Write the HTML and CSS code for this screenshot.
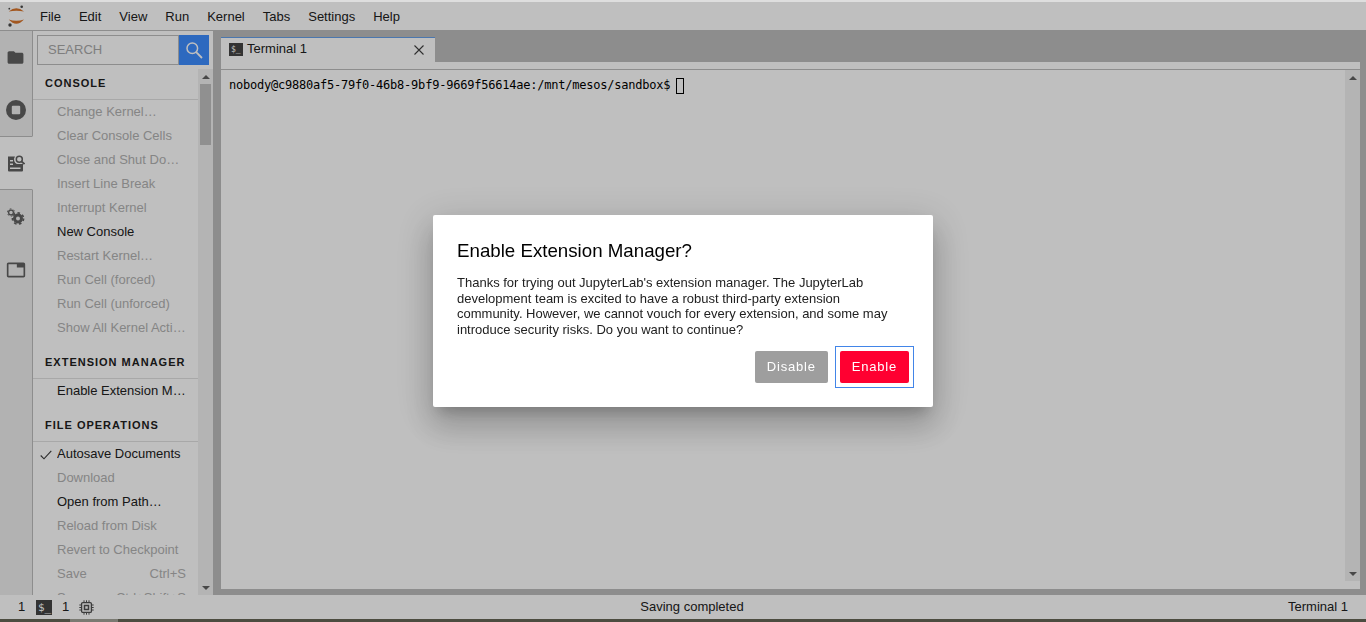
FILE: index.html
```html
<!DOCTYPE html>
<html lang="en">
<head>
<meta charset="utf-8">
<title>JupyterLab</title>
<link rel="stylesheet" href="styles.css">
</head>
<body>
<div class="top-strip"></div>
<header class="menubar">
  <div class="logo">
    <svg width="31" height="28" viewBox="0 0 31 28">
      <path d="M8.700 9.500Q16.300 3 24 9.500Q16.300 8.200 8.700 9.500Z" fill="#d9742a"/>
      <path d="M8.700 17.500Q16.300 26 24 17.500Q16.300 20.200 8.700 17.500Z" fill="#d9742a"/>
      <circle cx="21.700" cy="4.700" r="1.300" fill="#4a4a4a"/>
      <circle cx="9.300" cy="6.700" r=".9" fill="#4a4a4a"/>
      <circle cx="10" cy="23" r="1.700" fill="#4a4a4a"/>
    </svg>
  </div>
  <nav class="menu">
    <span class="menu-item">File</span><span class="menu-item">Edit</span><span class="menu-item">View</span><span class="menu-item">Run</span><span class="menu-item">Kernel</span><span class="menu-item">Tabs</span><span class="menu-item">Settings</span><span class="menu-item">Help</span>
  </nav>
</header>

<main class="workspace">
  <aside class="sidetabs">
    <div class="sidetab first">
      <svg class="icon" width="19" height="19" viewBox="0 0 24 24"><path d="M10 4H4c-1.100 0-2 .9-2 2v12c0 1.100.9 2 2 2h16c1.100 0 2-.9 2-2V8c0-1.100-.9-2-2-2h-8l-2-2z"/></svg>
    </div>
    <div class="sidetab">
      <svg class="icon" width="20" height="20" viewBox="0 0 20 20"><path fill-rule="evenodd" d="M10 0a10 10 0 1 0 0 20a10 10 0 1 0 0-20zM6.800 5.800h6.400a1 1 0 0 1 1 1v6.400a1 1 0 0 1-1 1h-6.400a1 1 0 0 1-1-1v-6.400a1 1 0 0 1 1-1z"/></svg>
    </div>
    <div class="sidetab active">
      <svg class="icon" width="18" height="18" viewBox="0 0 18 18"><path fill-rule="evenodd" d="M1 2.500h7a5 5 0 0 0 1.800 7.500H16v6.500a1 1 0 0 1-1 1H2a1 1 0 0 1-1-1zM3 6v1.500h3V6zM3 9.500v1.500h3V9.500zM3 13.500v1.500h10.500v-1.500z"/><circle cx="12.300" cy="5.300" r="3" fill="none" stroke="#616161" stroke-width="1.500"/><path d="M14.500 7.500l3 2.500" stroke="#616161" stroke-width="1.800" fill="none"/></svg>
    </div>
    <div class="sidetab">
      <svg class="icon" width="18" height="18" viewBox="0 0 18 18">
        <circle cx="4" cy="4.500" r="2.400" fill="none" stroke="#616161" stroke-width="1.300"/>
        <circle cx="4" cy="4.500" r="3.600" fill="none" stroke="#616161" stroke-width="1" stroke-dasharray="1.900 1.870"/>
        <circle cx="11" cy="10.500" r="3.500" fill="none" stroke="#616161" stroke-width="3"/>
        <circle cx="11" cy="10.500" r="5.600" fill="none" stroke="#616161" stroke-width="1.600" stroke-dasharray="2.600 2.430"/>
      </svg>
    </div>
    <div class="sidetab">
      <svg class="icon" width="20" height="20" viewBox="0 0 24 24"><path d="M21 3H3c-1.100 0-2 .9-2 2v14c0 1.100.9 2 2 2h18c1.100 0 2-.9 2-2V5c0-1.100-.9-2-2-2zm0 16H3V5h10v4h8v10z"/></svg>
    </div>
    <div class="sidetab-rest"></div>
  </aside>

  <section class="palette">
    <div class="search">
      <div class="search-input">SEARCH</div>
      <div class="search-btn">
        <svg width="18" height="18" viewBox="0 0 18 18" fill="none" stroke="#fff" stroke-width="1.500"><circle cx="7.300" cy="7.300" r="5.300"/><path d="M11.200 11.200l5.800 5.800" stroke-width="1.800"/></svg>
      </div>
    </div>
    <div class="palette-body">
      <div class="cmd-list">
        <h2 class="cmd-header first">Console</h2>
        <div class="cmd off"><span class="cmd-label">Change Kernel…</span></div>
        <div class="cmd off"><span class="cmd-label">Clear Console Cells</span></div>
        <div class="cmd off"><span class="cmd-label">Close and Shut Down…</span></div>
        <div class="cmd off"><span class="cmd-label">Insert Line Break</span></div>
        <div class="cmd off"><span class="cmd-label">Interrupt Kernel</span></div>
        <div class="cmd"><span class="cmd-label">New Console</span></div>
        <div class="cmd off"><span class="cmd-label">Restart Kernel…</span></div>
        <div class="cmd off"><span class="cmd-label">Run Cell (forced)</span></div>
        <div class="cmd off"><span class="cmd-label">Run Cell (unforced)</span></div>
        <div class="cmd off"><span class="cmd-label">Show All Kernel Activity</span></div>
        <h2 class="cmd-header">Extension Manager</h2>
        <div class="cmd"><span class="cmd-label">Enable Extension Manager</span></div>
        <h2 class="cmd-header">File Operations</h2>
        <div class="cmd">
          <svg class="check" width="12" height="10" viewBox="0 0 12 10" fill="none" stroke="#3a3a3a" stroke-width="1.100"><path d="M.7 5.500L4 8.800L11.300 .8"/></svg>
          <span class="cmd-label">Autosave Documents</span>
        </div>
        <div class="cmd off"><span class="cmd-label">Download</span></div>
        <div class="cmd"><span class="cmd-label">Open from Path…</span></div>
        <div class="cmd off"><span class="cmd-label">Reload from Disk</span></div>
        <div class="cmd off"><span class="cmd-label">Revert to Checkpoint</span></div>
        <div class="cmd off"><span class="cmd-label">Save</span><span class="cmd-key">Ctrl+S</span></div>
        <div class="cmd off"><span class="cmd-label">Save As…</span><span class="cmd-key">Ctrl+Shift+S</span></div>
      </div>
      <div class="scrollbar">
        <div class="arrow up"></div>
        <div class="thumb"></div>
        <div class="scroll-space"></div>
        <div class="arrow down"></div>
      </div>
    </div>
  </section>

  <section class="dock">
    <div class="tabbar">
      <div class="tab">
        <span class="term-icon small">$_</span>
        <span class="tab-title">Terminal 1</span>
        <svg class="tab-close" width="10" height="10" viewBox="0 0 10 10" fill="none" stroke="#3f3f3f" stroke-width="1.100"><path d="M.5 .5l9 9M9.500 .5l-9 9"/></svg>
      </div>
    </div>
    <div class="term-panel">
      <div class="term-toolbar"></div>
      <div class="term-body">
        <div class="term-text"><span>nobody@c9880af5-79f0-46b8-9bf9-9669f56614ae:/mnt/mesos/sandbox$ </span><span class="cursor"></span></div>
        <div class="scrollbar">
          <div class="arrow up"></div>
          <div class="scroll-space"></div>
          <div class="arrow down"></div>
        </div>
      </div>
    </div>
  </section>
</main>

<footer class="statusbar">
  <div class="status-left">
    <span class="status-num">1</span>
    <span class="term-icon">$_</span>
    <span class="status-num">1</span>
    <svg class="chip" width="15" height="15" viewBox="0 0 15 15" fill="none" stroke="#505050" stroke-width="1.300">
      <rect x="2.600" y="2.600" width="9.800" height="9.800" rx="1.200"/>
      <rect x="5.500" y="5.500" width="4" height="4" stroke-width="1.500"/>
      <path d="M5 .3v2M7.500 .3v2M10 .3v2M5 12.700v2M7.500 12.700v2M10 12.700v2M.3 5h2M.3 7.500h2M.3 10h2M12.700 5h2M12.700 7.500h2M12.700 10h2" stroke-width="1"/>
    </svg>
  </div>
  <div class="status-mid">Saving completed</div>
  <div class="status-right">Terminal 1</div>
</footer>
<div class="bottom-strip"><div class="bottom-thumb"></div></div>

<div class="overlay">
  <div class="dialog" role="dialog">
    <h1 class="dialog-title">Enable Extension Manager?</h1>
    <p class="dialog-body">Thanks for trying out JupyterLab's extension manager. The JupyterLab development team is excited to have a robust third-party extension community. However, we cannot vouch for every extension, and some may introduce security risks. Do you want to continue?</p>
    <div class="dialog-actions">
      <button class="btn btn-muted">Disable</button>
      <button class="btn btn-accent">Enable</button>
    </div>
  </div>
</div>
</body>
</html>
```

FILE: styles.css
```css
* { box-sizing: border-box; }
html, body { margin: 0; height: 622px; overflow: hidden; }
body {
  display: flex;
  flex-direction: column;
  font-family: "Liberation Sans", Arial, sans-serif;
  font-size: 13px;
  color: #212121;
  background: #bdbdbd;
}

.top-strip { height: 2px; background: #dedede; position: relative; z-index: 2; flex: none; }
.menubar {
  flex: none;
  height: 29px;
  display: flex;
  align-items: flex-start;
  background: #fff;
  border-bottom: 1px solid #bdbdbd;
}
.logo { width: 31px; height: 28px; flex: none; }
.logo svg { display: block; }
.menu { display: flex; padding-top: 1px; }
.menu-item { padding: 0 9px; line-height: 28px; }

.workspace { flex: 1; display: flex; min-height: 0; }

.sidetabs { width: 33px; flex: none; display: flex; flex-direction: column; background: #eeeeee; }
.sidetab {
  height: 53px;
  flex: none;
  display: flex;
  align-items: center;
  justify-content: center;
  padding-right: 1px;
  border-right: 1px solid #bdbdbd;
}
.sidetab.first { height: 52px; }
.sidetab.active { height: 54px; background: #fff; border-right-color: #fff; border-top: 1px solid #bdbdbd; border-bottom: 1px solid #bdbdbd; }
.sidetab-rest { flex: 1; border-right: 1px solid #bdbdbd; }
.icon { fill: #616161; display: block; }

.palette { width: 180px; flex: none; display: flex; flex-direction: column; background: #fff; min-height: 0; }
.search { display: flex; height: 38px; padding: 4px 4px 4px 4px; flex: none; }
.search-input {
  flex: 1;
  border: 1px solid #bdbdbd;
  padding-left: 10px;
  line-height: 28px;
  color: #a8a8a8;
}
.search-btn { width: 30px; background: #3d8cff; display: flex; align-items: center; justify-content: center; flex: none; }
.palette-body { flex: 1; display: flex; min-height: 0; }
.cmd-list { flex: 1; overflow: hidden; min-width: 0; }
.cmd-header {
  margin: 0;
  height: 39px;
  padding-top: 14px;
  line-height: 16px;
  padding-left: 12px;
  font-size: 11px;
  font-weight: 700;
  letter-spacing: 1px;
  text-transform: uppercase;
  color: #212121;
  border-bottom: 1px solid #e0e0e0;
}
.cmd-header.first { height: 31px; padding-top: 6px; }
.cmd {
  height: 24px;
  display: flex;
  align-items: center;
  padding: 0 12px 0 24px;
  line-height: 24px;
  position: relative;
  color: #212121;
}
.cmd.off { color: #b2b2b2; }
.cmd-label { flex: 1; min-width: 0; white-space: nowrap; overflow: hidden; text-overflow: ellipsis; }
.cmd-key { flex: none; margin-left: 8px; }
.check { position: absolute; left: 7px; top: 8px; }

.scrollbar { width: 15px; flex: none; background: #f1f1f1; display: flex; flex-direction: column; align-items: center; }
.arrow { width: 15px; height: 15px; flex: none; display: flex; align-items: center; justify-content: center; }
.arrow::before { content: ""; border-left: 4px solid transparent; border-right: 4px solid transparent; }
.arrow.up::before { border-bottom: 4px solid #606060; }
.arrow.down::before { border-top: 4px solid #606060; }
.thumb { width: 11px; height: 61px; background: #c1c1c1; flex: none; }
.scroll-space { flex: 1; }

.dock { flex: 1; min-width: 0; display: flex; flex-direction: column; background: #bdbdbd; padding: 6px 6px 6px 8px; }
.tabbar { height: 25px; flex: none; display: flex; }
.tab {
  width: 214px;
  display: flex;
  align-items: center;
  background: #fff;
  border-top: 1px solid #649fe8;
  padding: 0 11px 4px 8px;
  gap: 4px;
}
.tab-title { flex: 1; }
.tab-close { flex: none; margin-top: 4px; }
.term-icon {
  width: 16px;
  height: 15px;
  flex: none;
  background: #444;
  color: #fff;
  font-family: "DejaVu Sans Mono", monospace;
  font-size: 11px;
  line-height: 16px;
  padding-left: 2px;
  overflow: hidden;
}
.term-icon.small { width: 14px; height: 13px; font-size: 8px; line-height: 14px; padding-left: 2px; margin-top: 3px; }
.term-panel { flex: 1; min-height: 0; display: flex; flex-direction: column; background: #fff; }
.term-toolbar { height: 8px; flex: none; border-bottom: 1px solid #bdbdbd; }
.term-body { flex: 1; min-height: 0; display: flex; padding-bottom: 8px; }
.term-text {
  flex: 1;
  min-width: 0;
  padding: 8px 0 0 8px;
  font-family: "DejaVu Sans Mono", monospace;
  font-size: 12px;
  letter-spacing: -0.22px;
  line-height: 15px;
  white-space: pre;
  color: #000;
  display: flex;
  align-items: flex-start;
}
.cursor { width: 8px; height: 16px; border: 1px solid #000; margin-left: -1px; flex: none; }

.statusbar {
  flex: none;
  height: 24px;
  display: flex;
  align-items: center;
  background: #fff;
  padding: 0 18px 2px 18px;
}
.status-left { display: flex; align-items: center; gap: 10px; flex: 1; margin-top: 2px; }
.status-num { width: 8px; margin-top: -2px; }
.status-mid { flex: none; margin-left: 18px; }
.status-right { flex: 1; text-align: right; }
.chip { display: block; margin-left: -1px; }
.bottom-strip { height: 3px; flex: none; background: #4c4c40; position: relative; z-index: 2; padding-left: 70px; }
.bottom-thumb { width: 48px; height: 3px; background: #7a7a72; }

.overlay {
  position: fixed;
  inset: 0;
  background: rgba(0, 0, 0, .25);
  display: flex;
  align-items: center;
  justify-content: center;
  z-index: 1;
}
.dialog {
  width: 500px;
  height: 192px;
  background: #fff;
  border-radius: 2px;
  padding: 24px;
  display: flex;
  flex-direction: column;
  box-shadow: 0 10px 13px -6px rgba(0, 0, 0, .2), 0 20px 31px 3px rgba(0, 0, 0, .14), 0 8px 38px 7px rgba(0, 0, 0, .12);
  color: #212121;
}
.dialog-title { margin: 0; font-size: 18.72px; font-weight: 400; line-height: 24px; color: #000; }
.dialog-body { margin: 12px 0 0; font-size: 13px; line-height: 15.6px; }
.dialog-actions { margin-top: auto; display: flex; justify-content: flex-end; gap: 12px; }
.btn {
  height: 32px;
  border: 0;
  border-radius: 2px;
  padding: 0 12px 2px;
  font-family: inherit;
  font-size: 13px;
  letter-spacing: .8px;
  color: #fff;
}
.btn-muted { background: #9e9e9e; }
.btn-accent { background: #ff0031; position: relative; }
.btn-accent::after { content: ""; position: absolute; inset: -5px; border: 1px solid #4285e8; }
```
